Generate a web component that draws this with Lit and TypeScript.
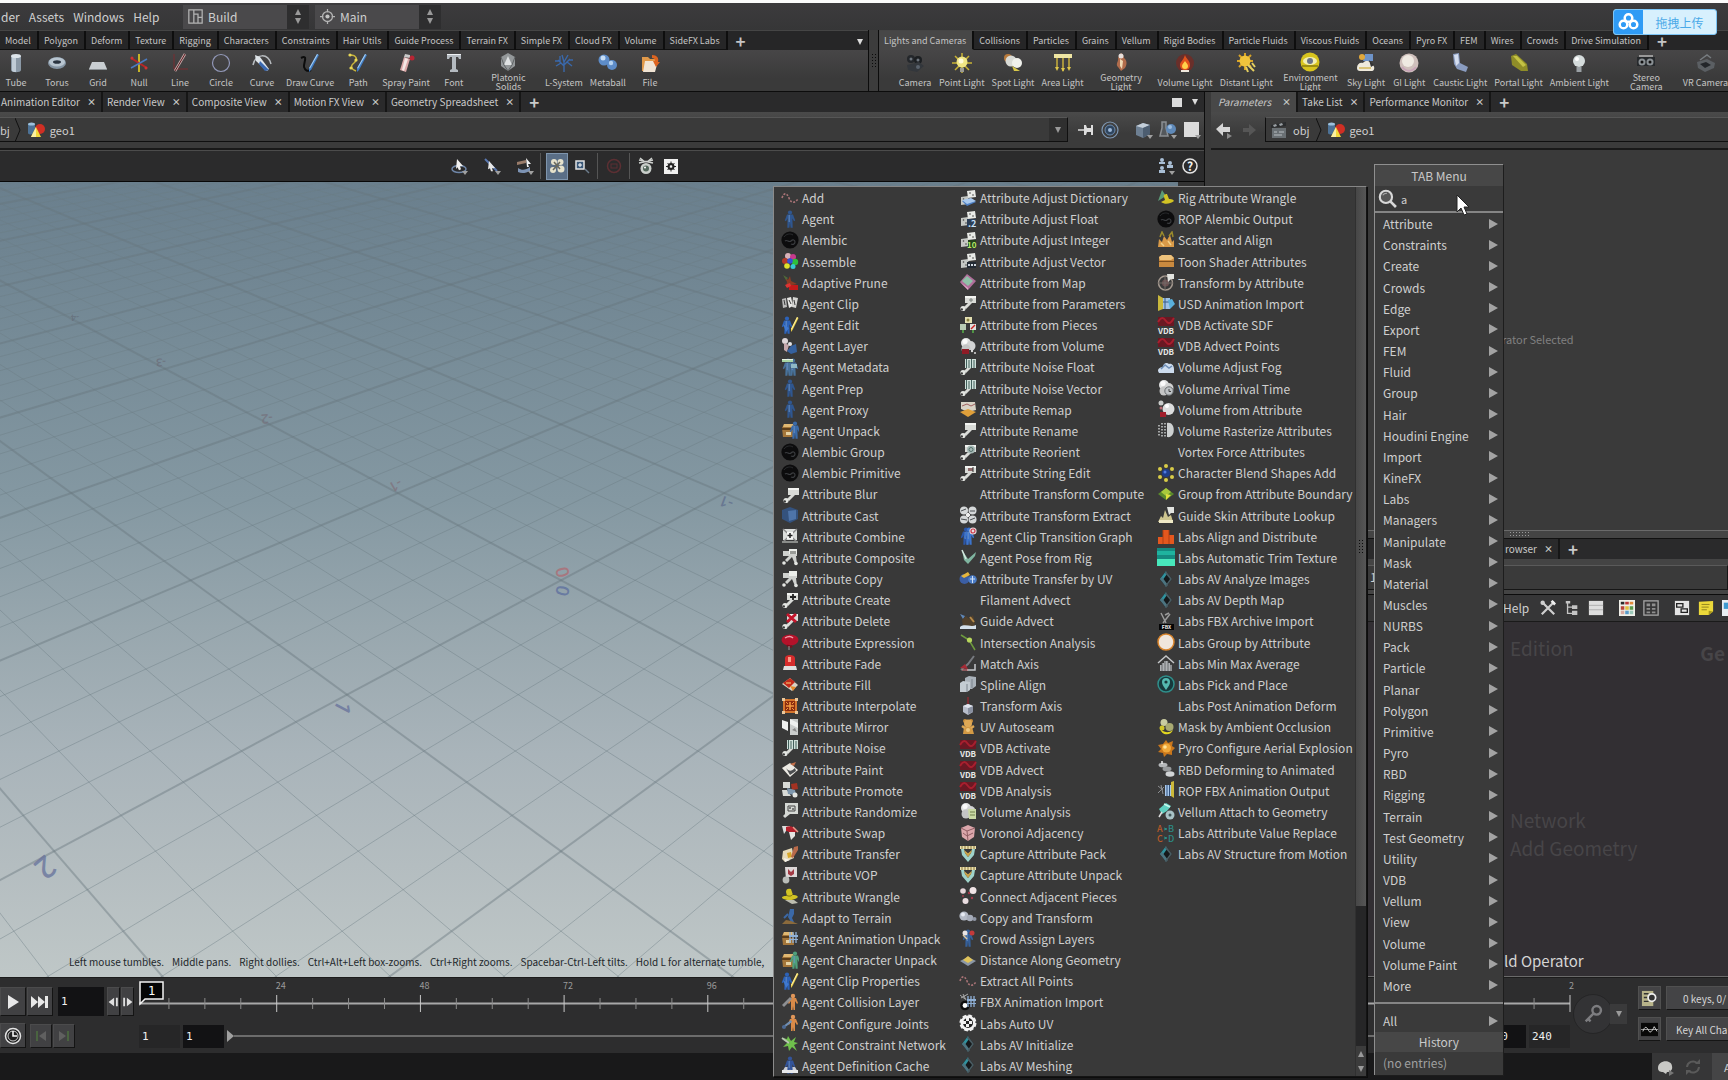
import { LitElement, html, svg, css } from "lit";
import type { TemplateResult } from "lit";
import { customElement, property } from "lit/decorators.js";
import { classMap } from "lit/directives/class-map.js";

type Art = TemplateResult | string;

/* ---------- icon parts (18 x 18 box) ---------- */
const attr = (over: Art = "", fill = "#d9dbd7") => svg`
  <path d="M6 2h11v7h-4l-6 6-2-2 4-4H6z" fill=${fill}/>
  <path d="M6 2h11v2H6z" fill="#f3f4f1"/>
  <circle cx="4" cy="14.5" r="2.6" fill="#e4e6e2"/><circle cx="2.8" cy="15.4" r="1.2" fill="#3a3a3a"/>${over}`;
const attrTwo = (over: Art = "") => svg`
  <path d="M2 3h9v-2h5v7h-1l1 8h-2l-3-7-5 5-2-2 4-4H2z" fill="#cfd1ce"/>
  <path d="M8 1h8v5H8z" fill="#eceeea"/><circle cx="3" cy="15" r="1.8" fill="#e4e6e2"/><circle cx="15" cy="15.5" r="1.8" fill="#e4e6e2"/>${over}`;
const person = (c = "#2f568f", x = 0) => svg`
  <g transform=${`translate(${x} 0)`}><circle cx="9" cy="2.6" r="2.1" fill=${c}/>
  <path d="M6 4.500h6l2.200 6-1.200.8-1.600-3 .3 9.400H9.600L9 12.500l-.6 5.200H6.300l.3-9.400-1.600 3-1.200-.8z" fill=${c}/><path d="M7.500 5h1.500v7H7.500z" fill="#6d92c4" opacity=".6"/></g>`;
const dice = (over: Art = "") => svg`
  <path d="M8 2l8-1 1 7-8 1z" fill="#e9ebe7"/><path d="M2 8l7-1 1 8-8 1z" fill="#c5c8c4"/>
  <circle cx="11" cy="4" r=".8" fill="#444"/><circle cx="14" cy="6" r=".8" fill="#444"/><circle cx="4.500" cy="10" r=".8" fill="#444"/><circle cx="7" cy="13" r=".8" fill="#444"/>${over}`;
const alembic = svg`<circle cx="9" cy="9" r="8.600" fill="#0c0c0d"/>
  <path d="M4 10c2-2 4 2 6 0s4-1 4 1-2 3-4 2" fill="none" stroke="#3b3d40" stroke-width="1.200"/><path d="M3 6c2-3 6-4 9-2" fill="none" stroke="#2a2c2e"/>`;
const vdb = svg`<rect x="1" y="1" width="16" height="9" fill="#6a1823"/>
  <path d="M1 6c3-5 5-5 8-1s5 2 8-3" fill="none" stroke="#a81f2e" stroke-width="2"/>
  <text x="9" y="17.500" font-size="8" font-weight="700" text-anchor="middle" fill="#e8e8e8">VDB</text>`;
const labs = svg`<path d="M9 1l6 8-6 8-6-8z" fill="#15191b"/><path d="M9 1L3 9l2 2 5-7z" fill="#2f929e"/>
  <path d="M3 9l6 8 2-2-6-8z" fill="#4c7480"/><path d="M9 1l6 8-6 8-1-1 5-7-5-6z" fill="#4a5c62"/>`;
const chest = (over: Art) => svg`<path d="M1 7l2-4h9l1 4v9H2z" fill="#a4763a"/><path d="M1 7h12v2H1z" fill="#5b3d1a"/>
  <path d="M3 3h9l1 3H2z" fill="#e0b872"/><path d="M5 11h5v3H5z" fill="#e5d2a4"/>${over}`;
const cloud = (over: Art = "") => svg`<circle cx="7" cy="6" r="5" fill="#e2e3e3"/><circle cx="11.500" cy="9" r="5" fill="#d2d3d3"/>
  <circle cx="7" cy="12" r="4.500" fill="#c4c5c5"/><circle cx="6" cy="4.500" r="2.500" fill="#fafafa"/>${over}`;
const pencil = svg`<path d="M16 1l1.500 1-6 12-1.500 2V13z" fill="#e9cf4a"/><path d="M16 1l.8.500-6 12-.8-.5z" fill="#fff0a0"/>`;
const film = svg`<path d="M8 6h9v2H8zM8 10h9v1H8z" fill="#8fb0d6"/><path d="M9 3v11M12 3v11M15 3v11" stroke="#8fb0d6" stroke-width="1.300"/>`;
const dotted = svg`<path d="M1 9c2-6 5-5 7 0s5 6 9 1" fill="none" stroke="#a87376" stroke-width="1.600" stroke-dasharray="2 1.500"/>`;
const orangeMan = (over: Art) => svg`<circle cx="12" cy="3" r="2.200" fill="#e0975a"/>
  <path d="M9 5h6l2 5-1 1-2-3v9h-1.500l-.5-4-.5 4H10V8L8 11l-1-1z" fill="#d98a48"/>${over}`;
const shield = svg`<path d="M1 1h16v3H1z" fill="#eadfae"/><path d="M3 1v3M6 1v3M9 1v3M12 1v3M15 1v3" stroke="#8d7a3c"/>
  <path d="M2 4l1 6 6 7 6-7 1-6-3 0-1 4-3 4-3-4-1-4z" fill="#9fd3ca"/><path d="M5 5l4 3 4-3-1 3-3 4-3-4z" fill="#c8a24a"/><path d="M6 5h6l-3 3z" fill="#3a3a3a"/>`;
const noise = svg`<path d="M6 1h11v9H6z" fill="#cfe0da"/><path d="M7.500 1v9M10 2v8M12.500 1v9M15 2v8" stroke="#42605b" stroke-width="1"/>`;

const icons: Record<string, Art> = {
  none: "",
  dotted,
  agent: person(),
  alembic,
  assemble: svg`<circle cx="7" cy="4" r="3" fill="#d8b0b8"/><circle cx="12" cy="5" r="3" fill="#c73a8c"/><circle cx="4" cy="9" r="3" fill="#b33a2a"/>
    <circle cx="14" cy="10" r="3.200" fill="#2ebf3b"/><circle cx="9" cy="9" r="2.800" fill="#3350d8"/><circle cx="6" cy="14" r="2.800" fill="#e0e22c"/><circle cx="12" cy="14.500" r="2.500" fill="#36c9d1"/>`,
  prune: svg`<path d="M3 3l4 4 2-4 1 5 6 3-5 1-6 2 1-5z" fill="#8a3b24"/><path d="M8 12h9v5h-9z" fill="#c21a1a"/><path d="M4 12l5-2 1 3-4 2z" fill="#d33"/><path d="M2 2l5 3-2 2z" fill="#4e6a3a"/>`,
  clip: svg`<path d="M1 5l4-1 1 9-4 1z" fill="#bbb"/><path d="M6 4l4-1 2 9-4 2z" fill="#e8e8e6"/><path d="M12 3l5 1-2 10-4-1z" fill="#d5d5d3"/><path d="M8 6l2 4M13 6l1 5M3 6l1 5" stroke="#3a3a3a"/>`,
  edit: svg`${person("#2c62b8", -3)}<path d="M2 8l6 4-3 4z" fill="#3f79d0"/>${pencil}`,
  layer: svg`<circle cx="4" cy="4" r="3" fill="#ded6d8"/><path d="M3 6l5 2-2 7-3-2z" fill="#c5a7ab"/><path d="M10 9l5-2 1 8-6 2-4-3z" fill="#35619f"/><circle cx="9" cy="7" r="2" fill="#e4e4e8"/>`,
  meta: svg`${person("#48729a", 3)}${person("#48729a", -2)}<path d="M1 1h11v3H1z" fill="#a9d6a4"/><path d="M1 1h11v1H1z" fill="#e6f2e4"/><path d="M10 6h6v4h-6z" fill="#8fb9c4"/>`,
  unpack: chest(person("#3a6aa8", 5)),
  unpackAnim: chest(film),
  unpackChar: chest(person("#4fa07c", 5)),
  blur: svg`<g transform="translate(1 1)">${attr()}</g>`,
  cast: svg`<path d="M1 4l8-3 8 3v9l-8 4-8-4z" fill="#34527d"/><path d="M7 5l8-1v9l-7 2z" fill="#4e74a8"/>`,
  combine: svg`<path d="M2 2h14v11H2z" fill="#dcdedb"/><path d="M2 2l14 13M16 2L2 15" stroke="#888" stroke-width="1.500"/><path d="M6 5h6v7H6z" fill="#f6f6f4"/><path d="M9 6v5M6.500 8.500h5" stroke="#222" stroke-width="1.500"/><path d="M1 14h16v2H1z" fill="#8a8c89"/>`,
  composite: attrTwo(svg`<path d="M9 3h6v3H9z" fill="#9a9c98"/>`),
  copy: attrTwo(),
  create: attr(svg`<path d="M12 3v6M9 6h6" stroke="#222" stroke-width="1.800"/>`),
  del: attr(svg`<path d="M6 2l9 8M15 2L6 10" stroke="#c5152b" stroke-width="3"/>`),
  expr: svg`<ellipse cx="9" cy="7" rx="8.500" ry="5.500" fill="#b3122a"/><path d="M4 5c3-2 6-2 8 0" stroke="#f0a0aa" stroke-width="1.500" fill="none"/><path d="M6 13c2-1 3 2 5 0" stroke="#7a0d1a" stroke-width="2" fill="none"/><path d="M8 13v4" stroke="#999"/>`,
  fade: svg`<path d="M4 4c0-4 10-4 10 0v8H4z" fill="#d62c2c"/><path d="M7 3h3v5H7z" fill="#ff9d8a"/><path d="M3 12h12l1 4H2z" fill="#dfdfdf"/>`,
  fill: svg`<path d="M1 9l8-6 8 7-6 6z" fill="#d8d2c4"/><path d="M2 8l7-5 5 4-6 6z" fill="#c42a1a"/><path d="M9 11l6 1-3 4z" fill="#e58a2a"/><path d="M5 8h5" stroke="#ffd27a"/>`,
  interp: svg`<rect x="2" y="2" width="14" height="14" fill="#d4752d"/><rect x="4" y="4" width="10" height="10" fill="#8c2c10"/><path d="M5 9h8M9 5v8" stroke="#f09a40" stroke-width="1.600"/><path d="M5 5l2 2M13 5l-2 2M5 13l2-2M13 13l-2-2" stroke="#f09a40"/><path d="M1 1h3v3H1zM14 1h3v3h-3zM1 14h3v3H1zM14 14h3v3h-3z" fill="#e9c79c"/>`,
  mirror: svg`<path d="M1 2l6 2v9l-6-3z" fill="#f0f1f0"/><path d="M9 1h8v16H9z" fill="#c9cccb"/><path d="M9 1l8 4v5L9 6z" fill="#eef0ef"/><path d="M11 12l3-2 2 4z" fill="#888"/>`,
  noise: attr(noise),
  paint: svg`<path d="M1 8l8-5 8 7-8 7z" fill="#eceae4"/><path d="M5 8c3 4 6 3 9 0l1 3-6 4z" fill="#4c4e50"/><path d="M9 4l6-2-2 4z" fill="#c7714a"/>`,
  promote: svg`<path d="M2 1h7v6H2zM1 9h5l4 6H2z" fill="#d8dad6"/><path d="M10 3l6-1 1 6-6 1z" fill="#a43222"/><path d="M6 7l8 2 1 5-8-1z" fill="#7f97ad"/><circle cx="14" cy="14" r="2.500" fill="#e4e6e2"/>`,
  random: svg`<path d="M4 1h13v11H9l-5 4-2-2 2-2z" fill="#d5d8d4"/><path d="M7 4h7v5H7z" fill="none" stroke="#444"/><circle cx="9" cy="6" r=".8"/><circle cx="12" cy="7" r=".8"/>`,
  swap: svg`<path d="M1 2h8v5H5l-2 3-1-4z" fill="#ddd"/><path d="M5 3c4-2 9 0 11 4l-4 4C9 9 7 7 5 7z" fill="#b3202c"/><path d="M8 8h6v4l-4 4z" fill="#e5e5e2"/><path d="M12 3l5 5" stroke="#e89a8a" stroke-width="1.500"/>`,
  transfer: svg`<path d="M2 6l9-3 2 10-9 4-3-3z" fill="#e6d9b8"/><path d="M6 8l4-1 1 5-4 1z" fill="#d8a72a"/><path d="M13 2l4-1v4l-5 8-2-1z" fill="#b86a4a"/><path d="M3 13l6 2-5 2z" fill="#f4f2ec"/>`,
  vop: svg`<path d="M4 1h12v10H8l-3 3z" fill="#ddd8d8"/><path d="M7 3l3 3 3-3v5l-3 2-3-2z" fill="#a23a44"/><circle cx="5" cy="14" r="3.400" fill="#b9bcb9"/>`,
  wrangle: svg`<path d="M1 11c4 3 12 3 16-1-1-2-4-2-5-2L10 2C7 1 5 2 5 5l1 4c-2 0-5 0-5 2z" fill="#d2c324"/><path d="M5 8c3 2 6 1 7-1" stroke="#7a6f10" fill="none"/><path d="M4 13h9l4 3-6 1z" fill="#bdbdaf"/>`,
  adapt: svg`<path d="M9 1h4v5l-2 4 2 4h-3L7 9z" fill="#3b68a6"/><path d="M7 6l-4 4" stroke="#3b68a6" stroke-width="2"/><path d="M1 16l4-4 5 1 7 3z" fill="#8a6a3c"/>`,
  collision: orangeMan(svg`<path d="M1 12l8-8 2 2-8 8z" fill="#8d8f92"/>`),
  joints: orangeMan(svg`<path d="M1 13l9-7 1 2-8 6z" fill="#6f8fb4"/><circle cx="3" cy="13" r="2" fill="#4d6a94"/>`),
  constraint: svg`<path d="M9 8L2 3l4 1 1-3 3 5 5-4-2 5 4 1-4 2 3 6-5-4-3 4-1-5-5 1 4-4z" fill="#6fc04c"/><path d="M1 3l7 5" stroke="#b9c8b2" stroke-width="2"/>`,
  cache: svg`<path d="M4 11h10l3 5H1z" fill="#c9ccd4"/>${person("#33549a")}<path d="M1 14h16v3H1z" fill="#e6e8ec"/>`,
  adjDict: dice(svg`<path d="M3 12l9-2 5 3-9 4z" fill="#4d7fc4"/><path d="M3 11l9-2 5 3-9 3z" fill="#a9c9ee"/>`),
  adjFloat: dice(svg`<rect x="8" y="9" width="9" height="8" fill="#2c3e55"/><text x="9" y="17" font-size="9" font-weight="700" fill="#cfe2f5">.2</text>`),
  adjInt: dice(svg`<rect x="9" y="9" width="8" height="8" fill="#24401c"/><text x="8" y="17" font-size="8" font-weight="700" fill="#b6e86a">10</text>`),
  adjVec: dice(svg`<rect x="8" y="10" width="9" height="6" fill="#222a33"/><path d="M9 13h8" stroke="#cfd6dd" stroke-width="2" stroke-dasharray="2 1"/>`),
  map: svg`<path d="M8 1l9 7-8 9-8-8z" fill="#b06f9b"/><path d="M8 3l6 5-5 5-6-5z" fill="#8fc1a8"/><path d="M1 9l8 8v-2z" fill="#e2a7c8"/>`,
  params: attr(svg`<path d="M12 4v4M10 6h4" stroke="#7b807c"/>`),
  pieces: svg`<rect x="6" y="1" width="7" height="6" fill="#e4e0b2"/><rect x="1" y="8" width="6" height="6" fill="#b9cbb4"/><rect x="11" y="8" width="6" height="6" fill="#dfe1dd"/><path d="M12 13l4-4" stroke="#c22" stroke-width="1.500"/><path d="M4 14v3M14 14v3" stroke="#58b04a" stroke-width="1.500"/><circle cx="9" cy="4" r="1.500" fill="#8a8240"/>`,
  volRed: cloud(svg`<rect x="3" y="12" width="7" height="5" fill="#8e1b26"/><circle cx="13" cy="14" r="1.200" fill="#ddd"/><circle cx="16" cy="16" r="1" fill="#ddd"/><rect x="10" y="13" width="2" height="2" fill="#3a3a3a"/>`),
  remap: svg`<path d="M2 2h14l1 8-8 2-7-3z" fill="#d9d3c6"/><path d="M1 12l8-3 8 3-8 5z" fill="#e0a03a"/><path d="M3 6l5-2 4 2 4-2" stroke="#a06060" fill="none"/>`,
  attr: attr(),
  reorient: attr(svg`<circle cx="12" cy="6.500" r="4" fill="#a5b8b4"/><circle cx="12" cy="6.500" r="2" fill="none" stroke="#55706a"/>`),
  strEdit: attr(svg`<rect x="9" y="4" width="5" height="3" fill="#8f6a6a"/><path d="M14 3v5" stroke="#333"/>`),
  extract: svg`<g fill="#d5d8d9"><circle cx="5" cy="4.500" r="4"/><circle cx="13.500" cy="4.500" r="4"/><circle cx="5" cy="13.500" r="4"/><circle cx="13.500" cy="13.500" r="4"/></g><path d="M2 5l5-2M11 5h5M2 13l6 1M11 14l5-2" stroke="#4b4f52"/><path d="M7 9h4M9 7v4" stroke="#eee" stroke-width="2"/>`,
  transGraph: svg`${person("#2b56a8", -2)}${person("#3c74cc", 1)}<circle cx="14" cy="4" r="3.600" fill="#e9dede"/><circle cx="14" cy="4" r="2" fill="none" stroke="#c8364a" stroke-width="1.200"/>`,
  pose: svg`<path d="M3 2l6 9 8-7-1 4-7 8-4-4z" fill="#7fb5a0"/><path d="M3 2l4 9" stroke="#d6e8e0" stroke-width="1.500"/>`,
  transUV: svg`<circle cx="5.500" cy="9" r="5" fill="#3b5ea4"/><path d="M2 6l7-4 2 3-6 3z" fill="#e5b53c"/><circle cx="13.500" cy="9.500" r="4.300" fill="#4b7cc6"/><path d="M11 9h5M13.500 6v7" stroke="#cfe0f6"/>`,
  guide: svg`<path d="M1 2l5 2-2 3z" fill="#5f87b8"/><path d="M3 8l4-4 3 3 4-4 2 8-1 3H4z" fill="#50402c"/><path d="M1 15c5-4 11 1 16-2v4H1z" fill="#d5e0ea"/><path d="M11 5l4 5" stroke="#b58a4a" stroke-width="2"/>`,
  inter: svg`<path d="M2 2l8 5 6 10" fill="none" stroke="#6d9a3e" stroke-width="1.500"/><circle cx="10.500" cy="7" r="2.600" fill="#b7d65c"/>`,
  match: svg`<path d="M2 16l7-6 6-8" stroke="#777a80" stroke-width="2" fill="none"/><path d="M1 14l5-4 3 5z" fill="#a52a35"/><path d="M8 16h8v-6" stroke="#c5c7cc" stroke-width="1.500" fill="none"/><path d="M3 16h6" stroke="#e07a80"/>`,
  spline: svg`<path d="M6 3l4-2 7 1v9l-4 3H6z" fill="#aab2ba"/><path d="M1 8l3-2 7 1v8l-3 2H1z" fill="#c4ccd3"/><path d="M8 9v8M13 4v9" stroke="#7a838c"/>`,
  tAxis: svg`<path d="M9 0v7" stroke="#8a2a30" stroke-width="1.500"/><path d="M4 9l5-2 5 2v6l-5 3-5-3z" fill="#b7bdca"/><path d="M9 11v6l5-2V9z" fill="#8990a0"/><path d="M4 9l5-2 5 2-5 2z" fill="#e1e5ee"/>`,
  teddy: svg`<circle cx="6" cy="3" r="2" fill="#c98f3e"/><circle cx="12" cy="3" r="2" fill="#c98f3e"/><circle cx="9" cy="5.500" r="4" fill="#e0a955"/><path d="M5 9h8l2 7H4z" fill="#d39a45"/><path d="M3 8l3 2M15 8l-3 2" stroke="#e0a955" stroke-width="2.500"/><circle cx="9" cy="12" r="2" fill="#efc880"/>`,
  vdb,
  volAn: cloud(svg`<path d="M9 7h8v10h-7z" fill="#c9d8a4"/><path d="M11 10h5M11 13h5" stroke="#6f7f4a"/>`),
  voronoi: svg`<path d="M2 4l7-3 7 3-1 9-6 4-6-4z" fill="#dba7ab"/><path d="M2 4l6 3 8-3M8 7l1 10M4 9l4 3 6-3" stroke="#8f5c62" fill="none"/>`,
  shield,
  connect: svg`<circle cx="4" cy="4" r="2.800" fill="#e5d5d8"/><circle cx="14" cy="3.500" r="3.500" fill="#f0e4e6"/><circle cx="6.500" cy="14" r="3" fill="#eadde0"/><circle cx="10" cy="6" r="1.200" fill="#a03848"/><circle cx="13" cy="11" r="1.200" fill="#a03848"/><circle cx="4" cy="9" r="1" fill="#a03848"/>`,
  copyT: svg`<circle cx="5" cy="8" r="4.600" fill="#b4bac6"/><circle cx="4" cy="6.500" r="2" fill="#e6eaf2"/><circle cx="11" cy="10" r="3.300" fill="#a5abb8"/><circle cx="15.500" cy="11" r="2" fill="#9097a5"/>`,
  crowd: svg`${person("#35609a")}<circle cx="6" cy="4" r="2.500" fill="#e8e4e4"/><circle cx="13" cy="4" r="2.500" fill="#c43a3a"/><path d="M4 6l4 4" stroke="#e0c8a0" stroke-width="1.500"/>`,
  distance: svg`<path d="M1 10l8-4 8 4-8 5z" fill="#8b97a6"/><path d="M4 9l5-4 5 4-5 3z" fill="#e0c35a"/>`,
  fbx: svg`<path d="M1 2l5 4M2 5l7-4M4 1l3 6" stroke="#aaa"/><circle cx="6" cy="12.500" r="4.800" fill="#0e0e0e"/><circle cx="6" cy="12.500" r="2.400" fill="#fff"/>${film}`,
  autoUV: svg`<circle cx="9" cy="9" r="7.500" fill="#f2f2f2" stroke="#f2f2f2" stroke-width="2" stroke-dasharray="3.900 2"/><circle cx="9" cy="9" r="5" fill="#222"/><path d="M7 4h3v3H7zM4 7h3v3H4zM10 7h3v3h-3zM7 10h3v3H7z" fill="#f2f2f2"/>`,
  labs,
  rigWr: svg`<path d="M1 12L5 1l4 6z" fill="#5b9a76"/><path d="M4 13c4 3 9 2 13-1-1-2-4-2-5-2l-2-5c-2 0-4 1-3 3l1 3z" fill="#d2c324"/>`,
  scatter: svg`<path d="M1 16l1-8 3 3 2-6 3 4 3-5 2 7 2-2v7z" fill="#d99a48"/><path d="M3 6L5 1l2 4M12 5l3-4 1 5" stroke="#9a8a2c" stroke-width="1.500" fill="none"/><path d="M4 12l3 3M11 10l3 4" stroke="#f2d088" stroke-width="1.500"/>`,
  toon: svg`<path d="M2 5l3-2h9l3 3v9H2z" fill="#c98a3f"/><path d="M2 5l3-2h9l3 3-3 2H3z" fill="#edc27c"/><path d="M2 9h15v1H2z" fill="#7d4f1d"/>`,
  tByAttr: svg`<circle cx="8.500" cy="10" r="7" fill="none" stroke="#a59a90" stroke-width="1.500"/><circle cx="8.500" cy="10" r="3.500" fill="#6c5152"/><path d="M8 2v15M1 10h15" stroke="#726a66"/><path d="M10 1h7v5h-3l-3 3z" fill="#e2e4e0"/>`,
  usd: svg`<path d="M1 1l5 3v11l-5 2z" fill="#c9b83c"/><path d="M6 4h7v11H6z" fill="#9fc2e6"/><path d="M8 4v11M6 8h7" stroke="#395a86"/><path d="M11 6l4-1 3 5-5 5z" fill="#5ab0dc"/>`,
  fog: svg`<path d="M1 13c0-3 3-4 5-4 0-4 4-5 6-3 3-1 5 2 5 5v4H2z" fill="#cddcee"/><path d="M4 11l4-4 4 3 3-2" stroke="#6d8db5" fill="none" stroke-width="1.500"/>`,
  arrival: cloud(svg`<circle cx="12" cy="12" r="4.200" fill="#bfc3c6" stroke="#6a6e71"/><path d="M12 10v2.500h2" stroke="#444" fill="none"/>`),
  volFrom: svg`<circle cx="11.500" cy="9" r="6" fill="#dcdddd"/><circle cx="4" cy="3" r="2.500" fill="#c9cbca"/><rect x="3" y="12" width="6" height="5" fill="#a11f2c"/><circle cx="10" cy="6" r="2" fill="#fff"/><circle cx="4" cy="8" r="1.500" fill="#b86a72"/>`,
  raster: svg`<path d="M10 2c9-2 9 16 0 14z" fill="#cdd0d0"/><path d="M2 4v11M5 2v14M8 2v14" stroke="#c0c3c3" stroke-width="1.600" stroke-dasharray="1.500 1.500"/>`,
  blend: svg`<g fill="#d8cc48"><circle cx="9" cy="2" r="2"/><circle cx="9" cy="16" r="2"/><circle cx="3" cy="5" r="2"/><circle cx="15" cy="5" r="2"/><circle cx="3" cy="13" r="2"/><circle cx="15" cy="13" r="2"/></g><circle cx="9" cy="9" r="4" fill="#1e3d8a"/><circle cx="8" cy="8" r="1.500" fill="#4f7be0"/>`,
  group: svg`<path d="M9 3l8 6-8 6-8-6z" fill="#5b8a2c"/><path d="M9 3l5 4-5 4-5-4z" fill="#a8c83c"/><path d="M9 9l5 1-5 5z" fill="#e0e03c"/>`,
  skin: svg`<path d="M1 16l3-6 2 2 2-8 3 7 3-2 2 7z" fill="#cfc68f"/><path d="M10 1h7v6h-3l-2 2z" fill="#e2e4e0"/><path d="M2 14h14v3H2z" fill="#efe9c6"/>`,
  bars: svg`<path d="M1 10h5v7H1zM6 3h6v14H6zM12 8h5v9h-5z" fill="#e4571e"/><path d="M6 3v14M12 3v14" stroke="#b33f10"/>`,
  trim: svg`<rect width="18" height="18" fill="#158a80"/><path d="M0 3h18v4H0z" fill="#1fb39f"/><path d="M0 11h18v7H0z" fill="#48e8bc"/>`,
  fbxIn: svg`<path d="M4 1l5 10M13 2L6 11M8 3l4-2" stroke="#9a9a9a" stroke-width="1.500"/><rect x="2" y="12" width="15" height="6" fill="#050505"/><text x="9.500" y="17" font-size="5" font-weight="700" text-anchor="middle" fill="#eee">FBX</text>`,
  ring: svg`<circle cx="9" cy="9" r="8" fill="#f0e6dc" stroke="#d9852c" stroke-width="1.500"/>`,
  minmax: svg`<path d="M1 9l8-7 8 7" fill="none" stroke="#c4c6c8" stroke-width="1.500"/><path d="M3 11h12v6H3zM5 9h8v2H5zM7 7h4v2H7z" fill="#aeb1b4"/><path d="M5 9v8M8 7v10M11 7v10M14 10v7" stroke="#55585b" stroke-width=".8"/>`,
  pin: svg`<circle cx="9" cy="9" r="8" fill="#17393c" stroke="#2f8f8b" stroke-width="1.500"/><path d="M9 15c-3-4-4-6-4-8a4 4 0 018 0c0 2-1 4-4 8z" fill="#54b9b0"/><circle cx="9" cy="7" r="1.600" fill="#17393c"/>`,
  maskAO: svg`<circle cx="7" cy="4.500" r="3.500" fill="#c9cba0"/><circle cx="12.500" cy="9" r="4" fill="#a9aa72"/><path d="M3 10c2 4 8 6 13 2-2 6-12 6-13-2z" fill="#e2d820"/><circle cx="5" cy="10" r="2.500" fill="#cfc528"/>`,
  boom: svg`<path d="M9 1l2 3 5-2-1 5 3 2-3 3 0 4-5-1-3 3-1-4-5-1 3-3-3-4 5-1z" fill="#c9771c"/><circle cx="9.500" cy="9" r="4.500" fill="#f0a83a"/><circle cx="8" cy="8" r="1.800" fill="#ffe39a"/>`,
  rbd: svg`<ellipse cx="6" cy="5" rx="4.500" ry="2.300" fill="#b4b7b9"/><ellipse cx="10" cy="9" rx="4.500" ry="2.400" fill="#96999b"/><ellipse cx="13" cy="14" rx="4.500" ry="2.800" fill="#d1d4d6"/><path d="M5 1v3" stroke="#eee" stroke-width="1.500"/>`,
  ropFbx: svg`<path d="M1 5l5 4M1 12l6-6M4 4l2 9" stroke="#8d8f92"/><path d="M8 4h7v11H8z" fill="#a9c8ea"/><path d="M10 4v11M12.500 4v11" stroke="#30507a"/><path d="M14 1l3-1v17l-3-2z" fill="#cbb83a"/>`,
  vellum: svg`<path d="M2 7l7-6 5 3-4 5-5 3z" fill="#5fcfc0"/><path d="M7 2l6 3" stroke="#c6f5ec" stroke-width="1.500"/><path d="M5 10l-3 5" stroke="#ddd" stroke-width="1.500"/><circle cx="13" cy="13" r="4.500" fill="#a9c2c6"/><circle cx="13" cy="13" r="1.500" fill="#41575b"/>`,
  abcd: svg`<g font-size="9" font-weight="500"><text x="0" y="8" fill="#b85a28">A</text><text x="11" y="8" fill="#2d8c86">B</text><text x="0" y="18" fill="#b85a28">C</text><text x="11" y="18" fill="#2d8c86">D</text></g><path d="M7 4l3 1-3 1M7 13l3 1-3 1" stroke="#2d8c86" fill="none"/>`,
};

type Item = [string, string];
const columns: Item[][] = [
  [["Add", "dotted"], ["Agent", "agent"], ["Alembic", "alembic"], ["Assemble", "assemble"], ["Adaptive Prune", "prune"], ["Agent Clip", "clip"], ["Agent Edit", "edit"], ["Agent Layer", "layer"], ["Agent Metadata", "meta"], ["Agent Prep", "agent"], ["Agent Proxy", "agent"], ["Agent Unpack", "unpack"], ["Alembic Group", "alembic"], ["Alembic Primitive", "alembic"], ["Attribute Blur", "blur"], ["Attribute Cast", "cast"], ["Attribute Combine", "combine"], ["Attribute Composite", "composite"], ["Attribute Copy", "copy"], ["Attribute Create", "create"], ["Attribute Delete", "del"], ["Attribute Expression", "expr"], ["Attribute Fade", "fade"], ["Attribute Fill", "fill"], ["Attribute Interpolate", "interp"], ["Attribute Mirror", "mirror"], ["Attribute Noise", "noise"], ["Attribute Paint", "paint"], ["Attribute Promote", "promote"], ["Attribute Randomize", "random"], ["Attribute Swap", "swap"], ["Attribute Transfer", "transfer"], ["Attribute VOP", "vop"], ["Attribute Wrangle", "wrangle"], ["Adapt to Terrain", "adapt"], ["Agent Animation Unpack", "unpackAnim"], ["Agent Character Unpack", "unpackChar"], ["Agent Clip Properties", "edit"], ["Agent Collision Layer", "collision"], ["Agent Configure Joints", "joints"], ["Agent Constraint Network", "constraint"], ["Agent Definition Cache", "cache"]],
  [["Attribute Adjust Dictionary", "adjDict"], ["Attribute Adjust Float", "adjFloat"], ["Attribute Adjust Integer", "adjInt"], ["Attribute Adjust Vector", "adjVec"], ["Attribute from Map", "map"], ["Attribute from Parameters", "params"], ["Attribute from Pieces", "pieces"], ["Attribute from Volume", "volRed"], ["Attribute Noise Float", "noise"], ["Attribute Noise Vector", "noise"], ["Attribute Remap", "remap"], ["Attribute Rename", "attr"], ["Attribute Reorient", "reorient"], ["Attribute String Edit", "strEdit"], ["Attribute Transform Compute", "none"], ["Attribute Transform Extract", "extract"], ["Agent Clip Transition Graph", "transGraph"], ["Agent Pose from Rig", "pose"], ["Attribute Transfer by UV", "transUV"], ["Filament Advect", "none"], ["Guide Advect", "guide"], ["Intersection Analysis", "inter"], ["Match Axis", "match"], ["Spline Align", "spline"], ["Transform Axis", "tAxis"], ["UV Autoseam", "teddy"], ["VDB Activate", "vdb"], ["VDB Advect", "vdb"], ["VDB Analysis", "vdb"], ["Volume Analysis", "volAn"], ["Voronoi Adjacency", "voronoi"], ["Capture Attribute Pack", "shield"], ["Capture Attribute Unpack", "shield"], ["Connect Adjacent Pieces", "connect"], ["Copy and Transform", "copyT"], ["Crowd Assign Layers", "crowd"], ["Distance Along Geometry", "distance"], ["Extract All Points", "dotted"], ["FBX Animation Import", "fbx"], ["Labs Auto UV", "autoUV"], ["Labs AV Initialize", "labs"], ["Labs AV Meshing", "labs"]],
  [["Rig Attribute Wrangle", "rigWr"], ["ROP Alembic Output", "alembic"], ["Scatter and Align", "scatter"], ["Toon Shader Attributes", "toon"], ["Transform by Attribute", "tByAttr"], ["USD Animation Import", "usd"], ["VDB Activate SDF", "vdb"], ["VDB Advect Points", "vdb"], ["Volume Adjust Fog", "fog"], ["Volume Arrival Time", "arrival"], ["Volume from Attribute", "volFrom"], ["Volume Rasterize Attributes", "raster"], ["Vortex Force Attributes", "none"], ["Character Blend Shapes Add", "blend"], ["Group from Attribute Boundary", "group"], ["Guide Skin Attribute Lookup", "skin"], ["Labs Align and Distribute", "bars"], ["Labs Automatic Trim Texture", "trim"], ["Labs AV Analyze Images", "labs"], ["Labs AV Depth Map", "labs"], ["Labs FBX Archive Import", "fbxIn"], ["Labs Group by Attribute", "ring"], ["Labs Min Max Average", "minmax"], ["Labs Pick and Place", "pin"], ["Labs Post Animation Deform", "none"], ["Mask by Ambient Occlusion", "maskAO"], ["Pyro Configure Aerial Explosion", "boom"], ["RBD Deforming to Animated", "rbd"], ["ROP FBX Animation Output", "ropFbx"], ["Vellum Attach to Geometry", "vellum"], ["Labs Attribute Value Replace", "abcd"], ["Labs AV Structure from Motion", "labs"]],
];

const categories = ["Attribute", "Constraints", "Create", "Crowds", "Edge", "Export", "FEM", "Fluid", "Group", "Hair", "Houdini Engine", "Import", "KineFX", "Labs", "Managers", "Manipulate", "Mask", "Material", "Muscles", "NURBS", "Pack", "Particle", "Planar", "Polygon", "Primitive", "Pyro", "RBD", "Rigging", "Terrain", "Test Geometry", "Utility", "VDB", "Vellum", "View", "Volume", "Volume Paint", "More"];

/* ---------- shelf tool art (20 x 20 box) ---------- */
const wand = svg`<path d="M17 1l2 1-8 15-2 2 0-4z" fill="#3f7cc4"/><path d="M17 1l1 .5-8 14-.8-.5z" fill="#a9d0f2"/>`;
const leftTools: [string, Art][] = [
  ["Tube", svg`<path d="M5 3v14c0 3 10 3 10 0V3z" fill="#8b99a6"/><path d="M6 4v14c1 1 3 1 4 1V4z" fill="#c0ccd6"/><ellipse cx="10" cy="3" rx="5" ry="2" fill="#dde4ea"/>`],
  ["Torus", svg`<ellipse cx="10" cy="10" rx="9" ry="6" fill="#8595a4"/><ellipse cx="10" cy="9" rx="8" ry="4.500" fill="#b8c5d0"/><ellipse cx="10" cy="9" rx="4" ry="1.800" fill="#2a3440"/>`],
  ["Grid", svg`<path d="M4 9h12l3 7H1z" fill="#c9ced2"/><path d="M1 16h18v1H1z" fill="#8a9094"/>`],
  ["Null", svg`<path d="M10 1v18" stroke="#c6b428" stroke-width="2"/><path d="M2 5l16 10" stroke="#b82626" stroke-width="2"/><path d="M2 15L18 6" stroke="#4a7ac0" stroke-width="1.500"/><circle cx="3" cy="5" r="1.500" fill="#c33"/><circle cx="17" cy="15" r="1.500" fill="#c33"/>`],
  ["Line", svg`<path d="M4 1v15h14" fill="none" stroke="#7a2c30"/><path d="M15 1L5 18" stroke="#c9a8a8" stroke-width="2.500"/><path d="M15 1L5 18" stroke="#5a2024" stroke-width="1"/>`],
  ["Circle", svg`<circle cx="10" cy="10" r="8.500" fill="none" stroke="#9298b8" stroke-width="1.200"/>`],
  ["Curve", svg`<path d="M1 12c3-12 15-12 18-1" fill="none" stroke="#b8bcc0" stroke-width="1.500"/><path d="M3 2l5 2 9 12-2 2L4 8z" fill="#dfe5ea"/><path d="M8 8l9 9-4 1-6-7z" fill="#3b69b0"/>`],
  ["Draw Curve", svg`<path d="M1 5c8-4 2 6 3 9s3 5 7 3" fill="none" stroke="#0c0c0c" stroke-width="2"/>${wand}`],
  ["Path", svg`<path d="M2 2c7 0 8 5 4 8s-3 6 2 8" fill="none" stroke="#c8b43c" stroke-width="1.500"/><circle cx="2" cy="2" r="1.600" fill="#e8d858"/><circle cx="8" cy="7" r="1.600" fill="#e8d858"/><circle cx="3" cy="15" r="1.600" fill="#e8d858"/>${wand}`],
  ["Spray Paint", svg`<path d="M8 4l6 2-4 13-6-2z" fill="#dba8a8"/><path d="M9 5l3 1-4 12-2-1z" fill="#f6e8e6"/><path d="M9 1l5 1v3l-6-1z" fill="#c9c9c9"/><circle cx="16" cy="5" r="2.500" fill="#b82634"/>`],
  ["Font", svg`<path d="M3 1h14v5h-2l-1-2h-2v12l2 1v2H6v-2l2-1V4H6L5 6H3z" fill="#b4bac0"/><path d="M3 1h14v1H3z" fill="#eef1f4"/>`],
  ["Platonic Solids", svg`<path d="M10 1l7 4v9l-7 5-7-5V5z" fill="#94989a"/><path d="M10 4l4 9H6z" fill="#dfe2e3"/><path d="M3 5l3 8 4 6 4-6 3-8" fill="none" stroke="#5e6264"/>`],
  ["L-System", svg`<path d="M10 19V9M10 13L4 7M10 12l6-6M10 9L8 2M10 9l4-7M5 8H1M7 10L2 13M15 7h4M13 9l5 4M6 9V3" stroke="#3a68aa" stroke-width="1.400"/>`],
  ["Metaball", svg`<circle cx="6" cy="7" r="5.500" fill="#5d8cc8"/><circle cx="14" cy="12" r="5" fill="#5d8cc8"/><circle cx="5" cy="5" r="2.500" fill="#c8def5"/><circle cx="13" cy="10" r="2.200" fill="#b5d2f0"/>`],
  ["File", svg`<path d="M2 4h6l2 2h7v3L5 18H2z" fill="#e0994a"/><path d="M5 8h13l-3 11H3z" fill="#f0e4d4"/><path d="M12 2c5 0 7 3 6 7l2 0-4 5-3-6h2c0-2-1-3-3-3z" fill="#dd6420"/>`],
];
const bulb = (c: string) => svg`<circle cx="10" cy="8" r="6" fill=${c}/><rect x="7.500" y="14" width="5" height="5" fill="#9aa0a4"/><circle cx="8" cy="6" r="2" fill="#fff"/>`;
const rightTools: [string, Art][] = [
  ["Camera", svg`<circle cx="6" cy="6" r="4" fill="#24272b"/><circle cx="13" cy="7" r="4" fill="#1c1f22"/><path d="M2 12l12-3 5 4-7 6-9-2z" fill="#33373c"/><circle cx="6" cy="6" r="1.500" fill="#6d747c"/><circle cx="13" cy="7" r="1.500" fill="#6d747c"/><circle cx="13" cy="14" r="2" fill="#5a636d"/>`],
  ["Point Light", svg`<path d="M10 0v20M0 10h20M3 3l14 14M17 3L3 17" stroke="#c8b234" stroke-width="1.500"/><circle cx="10" cy="9" r="5.500" fill="#f0e684"/><circle cx="9" cy="8" r="2.500" fill="#fffbd8"/><rect x="8" y="15" width="4" height="4" fill="#9a9a92"/>`],
  ["Spot Light", svg`<circle cx="5" cy="5" r="4" fill="#b87a3c"/><circle cx="8" cy="8" r="5.500" fill="#d9dbd6"/><circle cx="14" cy="10" r="5" fill="#f0f1ec"/><path d="M9 13l8 5-6 0z" fill="#d8c84a"/>`],
  ["Area Light", svg`<path d="M1 1h18v4H1z" fill="#efe6a4"/><path d="M4 5v11M10 5v13M16 5v11" stroke="#c8ae3c" stroke-width="1.500"/><path d="M2 14h4l-2 4zM8 15h4l-2 4zM14 14h4l-2 4z" fill="#e0c84c"/>`],
  ["Geometry Light", svg`<path d="M10 1c3 2 2 4 4 6s2 6 0 9l-4 3-3-4c-3-3 1-6 0-9z" fill="#b06c4c"/><circle cx="10" cy="4" r="2.500" fill="#e8e0dc"/><path d="M9 7l3 2-1 8-2-3z" fill="#efd9b4"/>`],
  ["Volume Light", svg`<circle cx="10" cy="10" r="9" fill="#6a2f2a"/><path d="M10 2c1 4 5 5 5 10 0 3-2 5-5 5s-5-2-5-5c0-3 3-4 5-10z" fill="#e0521c"/><path d="M10 8c1 2 3 3 3 5s-1 3-3 3-3-1-3-3 2-3 3-5z" fill="#ffd24a"/><path d="M6 17h8v2H6z" fill="#f0e8dc"/>`],
  ["Distant Light", svg`<path d="M9 0v17M1 8h16M3 2l12 12M15 2L3 14" stroke="#d8a428" stroke-width="2"/><circle cx="9" cy="8" r="5.500" fill="#f0c43c"/><path d="M12 12l6 6M16 10l3 4M10 14l2 5" stroke="#e6d060" stroke-width="2"/>`],
  ["Environment Light", svg`<circle cx="10" cy="10" r="9.500" fill="#d8c41e"/><ellipse cx="10" cy="9" rx="7" ry="4" fill="#f2eeb0"/><circle cx="10" cy="9" r="3" fill="#6a7488"/><path d="M2 14h16" stroke="#8a7c10" stroke-width="1.500"/>`],
  ["Sky Light", svg`<path d="M9 1h8v7H7z" fill="#6e93c8"/><circle cx="6" cy="4" r="3" fill="#e0a83c"/><path d="M1 15c0-4 3-6 6-5 3-4 9-1 9 2 3 0 3 6 0 6H4c-2 0-3-1-3-3z" fill="#efeadc"/><path d="M13 7l5 5-3 2z" fill="#333"/><path d="M3 15h12" stroke="#d4b85a" stroke-width="1.500"/>`],
  ["GI Light", svg`<circle cx="10" cy="10" r="9.500" fill="#cfc0bc"/><circle cx="9" cy="8" r="6" fill="#efeae2"/><path d="M3 14c4 5 10 5 14 0" stroke="#c8a4b8" stroke-width="2" fill="none"/>`],
  ["Caustic Light", svg`<path d="M3 1l6-1 1 10 8 4-2 5-9-3-3-5z" fill="#8a9cc0"/><path d="M4 2l4-1 1 9-3 3z" fill="#d5def0"/>`],
  ["Portal Light", svg`<path d="M2 3l5-2 11 10 1 7-7 0L3 12z" fill="#8f8d28"/><path d="M4 3l4 0 9 9-3 2z" fill="#c4c244"/>`],
  ["Ambient Light", bulb("#d5dcdc")],
  ["Stereo Camera", svg`<path d="M1 5h18v9H1z" fill="#26292c"/><circle cx="6" cy="10" r="3.500" fill="#8a9094"/><circle cx="14" cy="10" r="3.500" fill="#8a9094"/><circle cx="6" cy="10" r="1.500" fill="#111"/><circle cx="14" cy="10" r="1.500" fill="#111"/><path d="M3 3h14v2H3z" fill="#999"/>`],
  ["VR Camera", svg`<path d="M1 9l10-3 8 4-1 5-9 4-7-4z" fill="#5b5f63"/><path d="M4 7l7-5 4 3" fill="none" stroke="#777c80" stroke-width="1.500"/><path d="M4 11l6-2 5 3-6 3z" fill="#23262a"/>`],
];

const leftShelf = ["Model", "Polygon", "Deform", "Texture", "Rigging", "Characters", "Constraints", "Hair Utils", "Guide Process", "Terrain FX", "Simple FX", "Cloud FX", "Volume", "SideFX Labs"];
const rightShelf = ["Lights and Cameras", "Collisions", "Particles", "Grains", "Vellum", "Rigid Bodies", "Particle Fluids", "Viscous Fluids", "Oceans", "Pyro FX", "FEM", "Wires", "Crowds", "Drive Simulation"];
const leftPaneTabs = ["Animation Editor", "Render View", "Composite View", "Motion FX View", "Geometry Spreadsheet"];
const rightPaneTabs = ["Parameters", "Take List", "Performance Monitor"];
const hints = ["Left mouse tumbles.", "Middle pans.", "Right dollies.", "Ctrl+Alt+Left box-zooms.", "Ctrl+Right zooms.", "Spacebar-Ctrl-Left tilts.", "Hold L for alternate tumble,"];

const pic = (art: Art, box = 18, cls = "pic") => html`<svg class=${cls} viewBox=${`0 0 ${box} ${box}`} aria-hidden="true">${art}</svg>`;
const geoIcon = svg`<path d="M1 3v9c0 2 7 2 7 0V3z" fill="#4d7296"/><ellipse cx="4.500" cy="3" rx="3.500" ry="1.600" fill="#9cc0dc"/><circle cx="13" cy="8" r="5" fill="#cf2f24"/><path d="M9 6l5 10H4z" fill="#f2d83a"/><path d="M9 6l0 10H4z" fill="#fbf0a0"/>`;
const drop = svg`<path d="M12 14h6l-3 4z" fill="#a0a0a0"/>`;

/* ---------- construction plane ---------- */
const project = (x: number, z: number): [number, number] => {
  const w = 1 - 0.1346 * (x + z);
  return [561 + (185.2 * (x - z)) / w, -337 + 735.3 / w];
};
const planeLines = () => {
  const out: TemplateResult[] = [];
  for (let i = -80; i <= 30; i++) {
    const c = i / 5;
    const near = Math.min(18, 6.2 - c);
    const far = -24;
    const major = i % 5 === 0;
    const [ax, ay] = project(c, near), [bx, by] = project(c, far);
    for (const m of [1, -1]) {
      const fx = (v: number) => (m === 1 ? v : 1122 - v);
      out.push(svg`<line x1=${fx(ax)} y1=${ay} x2=${fx(bx)} y2=${by} stroke=${major ? "#66757b" : "#6b7c83"} stroke-width=${major ? 2 : 1} stroke-opacity=${major ? 0.42 : 0.42}/>`);
    }
  }
  return out;
};
const planeLabels: [string, number, number, number, number, string][] = [
  ["0", 563, 390, 18, 76, "#b06a72"], ["0", 563, 409, 18, 104, "#5c6e9e"], ["1", 344, 526, 22, 118, "#66719b"],
  ["2", 46, 686, 30, 140, "#66719b"], ["-1", 396, 304, 14, 150, "#80727c"], ["-2", 267, 237, 13, 175, "#75717c"],
  ["-3", 161, 181, 11, 178, "#6b6c78"], ["-4", 75, 136, 9, 178, "#646d79"], ["-1", 726, 321, 15, 200, "#5f6d8c"],
];

@customElement("pane-tabs")
class PaneTabs extends LitElement {
  @property({ attribute: false }) tabs: string[] = [];
  @property({ attribute: false }) current = "";
  @property({ type: Boolean }) tools = false;
  static styles = css`
    :host { display: flex; height: 20px; background: #2a2a2b; color: #c9c9c9; font-size: 10px; }
    button { font: inherit; color: inherit; background: none; border: 0; padding: 0; white-space: nowrap; line-height: 20px; }
    .tab { display: flex; align-items: center; gap: 7px; padding: 0 5px 0 4px; border-right: 2px solid #161616; }
    .tab:first-child { padding-left: 1px; }
    .current { background: #484848; font-style: italic; gap: 11px; }
    .tab.current:first-child { padding-left: 7px; }
    .close { font-weight: 700; font-size: 9px; font-style: normal; }
    .add { padding: 0 8px; font-size: 17px; font-weight: 700; }
    .end { margin-left: auto; display: flex; align-items: center; gap: 10px; padding-right: 6px; }
    .box { width: 10px; height: 9px; background: #dcdcdc; }
    .down { border: 3px solid transparent; border-top: 6px solid #dcdcdc; border-bottom: 0; }
  `;
  render() {
    return html`${this.tabs.map((t) => html`<div class=${classMap({ tab: true, current: t === this.current })}>
        <button>${t}</button><button class="close" aria-label=${"Close " + t}>×</button></div>`)}
      <button class="add" aria-label="New tab">+</button>
      ${this.tools ? html`<div class="end"><span class="box"></span><span class="down"></span></div>` : ""}`;
  }
}

@customElement("tool-shelf")
class ToolShelf extends LitElement {
  @property({ attribute: false }) tabs: string[] = [];
  @property({ attribute: false }) tools: [string, Art][] = [];
  @property({ type: Boolean }) first = false;
  static styles = css`
    :host { display: flex; flex-direction: column; min-width: 0; overflow: hidden; color: #c4c4c4; font-size: 9px; }
    button { font: inherit; color: inherit; background: none; border: 0; padding: 0; }
    .tabs { display: flex; height: 20px; background: #262627; border-top: 1px solid #454545; box-sizing: border-box; }
    .tab { padding: 0 6px 0 5px; white-space: nowrap; border-right: 2px solid #0e0e0e; border-bottom: 1px solid #111; flex: none; }
    .tab.on { background: #474747; border-bottom-color: #474747; }
    .add { padding: 0 8px; font-size: 17px; font-weight: 700; line-height: 18px; }
    .down { margin: 8px 5px 0 auto; border: 3px solid transparent; border-top: 6px solid #dcdcdc; border-bottom: 0; height: 0; }
    .tools { display: flex; height: 41px; background: linear-gradient(#474647, #3a3a3a 70%); padding-left: 16px; }
    .tools.first { padding: 0; margin-left: -4px; }
    .tool { display: flex; flex-direction: column; align-items: center; min-width: 41px; padding: 3px 4px 0 3px; box-sizing: border-box; flex: none; line-height: 9px; }
    .tool.two { width: 67px; padding: 2px 6px 0; }
    .label { flex: 1; display: flex; align-items: center; white-space: nowrap; text-align: center; }
    .two .label { white-space: normal; }
    .pic { width: 20px; height: 20px; flex: none; }
  `;
  render() {
    const two = ["Platonic Solids", "Geometry Light", "Environment Light", "Stereo Camera"];
    return html`<div class="tabs">
        ${this.tabs.map((t) => html`<button class=${classMap({ tab: true, on: t === "Lights and Cameras" })}>${t}</button>`)}
        <button class="add" aria-label="Add shelf">+</button>${this.first ? html`<span class="down"></span>` : ""}
      </div>
      <div class=${classMap({ tools: true, first: this.first })}>
        ${this.tools.map(([n, a]) => html`<button class=${classMap({ tool: true, two: two.includes(n) })}>${pic(a, 20)}<span class="label">${n}</span></button>`)}
      </div>`;
  }
}

@customElement("app-root")
class AppRoot extends LitElement {
  static styles = css`
    :host { display: block; font-family: "Noto Sans CJK SC", "Noto Sans", sans-serif; color: #cfcfcf; font-size: 12px; }
    * { box-sizing: border-box; }
    button, input, select { font: inherit; color: inherit; background: none; border: 0; padding: 0; margin: 0; }
    select { appearance: none; }
    svg { display: block; }
    .page { position: relative; display: flex; flex-direction: column; min-height: 100vh; background: #3a3a3a; border-top: 3px solid #fbfbfb; overflow: hidden; }

    .menubar { display: flex; align-items: center; height: 27px; background: linear-gradient(#3c3b3d, #363637); padding: 0 0 0 1px; }
    .menubar nav { display: flex; gap: 9px; width: 182px; }
    .desk { display: flex; align-items: center; gap: 5px; width: 104px; height: 24px; padding-left: 5px; background: #4a494b; }
    .desk svg { width: 15px; height: 15px; flex: none; }
    .desk select { flex: 1; }
    .spin { width: 22px; height: 24px; margin-right: 6px; background: #2e2e2f; display: flex; flex-direction: column; align-items: center; justify-content: center; gap: 3px; }
    .up { border: 3px solid transparent; border-bottom: 6px solid #9a9a9a; border-top: 0; }
    .dn { border: 3px solid transparent; border-top: 6px solid #9a9a9a; border-bottom: 0; }

    .shelves { display: flex; border-bottom: 1px solid #0c0c0c; }
    .shelves .one { width: 868px; flex: none; }
    .shelves .two { flex: 1; }
    .shelf-grip { width: 11px; background: #3c3c3c; border: solid #0c0c0c; border-width: 0 1px; display: flex; align-items: center; justify-content: center; }
    .dots { width: 6px; height: 16px; background: radial-gradient(circle, #0a0a0a 1px, transparent 1px) 0 0 / 3px 3px; }

    .work { display: flex; flex: 1; min-height: 0; }
    .scene { width: 1205px; flex: none; display: flex; flex-direction: column; border-right: 1px solid #0d0d0d; }
    .side { flex: 1; min-width: 0; margin-left: 6px; display: flex; flex-direction: column; }
    .path { display: flex; align-items: center; height: 38px; padding: 6px 0 7px; background: linear-gradient(#4a4a4a, #3b3b3b 60%); border-bottom: 2px solid #191919; font-size: 11px; flex: none; }
    .field { display: flex; align-items: center; height: 25px; background: #3a3a3a; border: 1px solid #101010; border-top-color: #565656; }
    .scene .field { width: 1068px; border-left: 0; }
    .side .field { flex: 1; border-right: 0; border-left-color: #101010; padding-left: 4px; gap: 5px; }
    .chev { width: 6px; height: 24px; margin: 0 6px 0 5px; fill: none; stroke: #111; stroke-width: 1; flex: none; }
    .side .chev { margin: 0 0 0 1px; }
    .ico { width: 18px; height: 18px; flex: none; }
    .field .drop { margin-left: auto; width: 18px; height: 23px; background: #2f2f2f; display: flex; align-items: center; justify-content: center; }
    .name { margin-left: 5px; }
    .side .name { margin-left: 0; }
    .path-tools { display: flex; align-items: center; gap: 6px; padding-left: 9px; }
    .path-tools .far { margin-left: 10px; }
    .nav { display: flex; gap: 6px; padding: 0 8px 0 4px; }

    .tools { display: flex; align-items: center; height: 32px; background: #2b2b2c; border-top: 1px solid #4c4c4c; border-bottom: 1px solid #080808; padding: 0 4px 0 449px; flex: none; }
    .tools button { width: 20px; height: 25px; display: flex; align-items: center; justify-content: center; margin-right: 13px; }
    .tools .sep { width: 1px; height: 26px; background: #555; margin-right: 6px; }
    .tools .tight { margin-right: 5px; }
    .tools .on { background: #5a6e86; outline: 1px solid #7f95ad; }
    .tools .last { margin-left: auto; margin-right: 4px; }
    .tools .help { margin: 0; }

    .view { position: relative; flex: 1; overflow: hidden; background: linear-gradient(#6a7f8d, #768b97 20%, #8498a2 40%, #98a7ae 56%, #a9b4ba 72%, #b4bdc0 86%, #bfc7c7); border-right: 26px solid #333; }
    .plane { position: absolute; left: 0; top: 0; width: 1178px; height: 796px; font-family: "Open Sans", sans-serif; }
    .hint { position: absolute; left: 69px; bottom: 6px; display: flex; gap: 8px; color: #23282b; font-size: 10px; line-height: 18px; white-space: nowrap; }

    .params { height: 380px; flex: none; background: #3a3a3a; padding: 178px 0 0 291px; color: #808080; font-size: 11px; line-height: 22px; }
    .split { height: 9px; background: linear-gradient(#6a6a6a 1px, #444 1px); border-bottom: 1px solid #111; padding-left: 298px; flex: none; }
    .split i { display: block; width: 20px; height: 6px; margin-top: 1px; background: radial-gradient(circle, #999 1px, transparent 1px) 0 0 / 3px 3px; }
    .nettabs { padding-left: 293px; background: #2a2a2b; flex: none; }
    .netpath { height: 36px; padding: 6px 0; background: #444; border-bottom: 1px solid #0c0c0c; flex: none; }
    .netpath div { height: 25px; background: #3a3a3a; border: 1px solid #161616; border-top-color: #5a5a5a; padding-left: 158px; line-height: 22px; }
    .nettools { display: flex; align-items: center; height: 27px; background: #363637; border-bottom: 1px solid #1a1a1a; padding-left: 292px; gap: 8px; flex: none; overflow: hidden; }
    .nettools button { line-height: 24px; margin-right: 3px; }
    .nettools svg { width: 16px; height: 16px; flex: none; }
    .nettools .gap { margin-left: 7px; }
    .net { flex: 1; background: #322f33; color: #474548; font-size: 19px; padding: 10px 0 0 299px; display: flex; flex-direction: column; overflow: hidden; border-bottom: 1px solid #6a6a6a; white-space: nowrap; }
    .net p { margin: 0; line-height: 28px; }
    .net .row { display: flex; justify-content: space-between; padding-right: 3px; margin-bottom: 137px; line-height: 32px; }
    .net .row b { padding-top: 5px; }
    .net .op { margin: auto 0 2px -6px; color: #d5d5d5; font-size: 15px; line-height: 26px; }

    .time { display: grid; grid-template-columns: 139px 1fr 158px; height: 76px; background: #2d2d2e; border-top: 1px solid #1c1c1c; flex: none; font-family: "DejaVu Sans Mono", monospace; font-size: 11px; color: #f0f0f0; }
    .left { display: flex; flex-direction: column; gap: 7px; padding-top: 9px; }
    .line { display: flex; align-items: center; }
    .left button { height: 29px; width: 26px; margin-right: 1px; background: #414143; border: 1px solid #4b4b4c; border-right-color: #141414; border-bottom-color: #141414; display: flex; align-items: center; justify-content: center; }
    .left .half { width: 13px; }
    .left .off { width: 22px; height: 24px; }
    .left .clock { height: 25px; margin-right: 4px; }
    .left svg { width: 18px; height: 18px; flex: none; }
    .left .half svg { width: 11px; height: 12px; }
    .line .frame { width: 46px; height: 29px; margin: 0 3px 0 4px; background: #121214; padding-left: 3px; }
    .mid { display: flex; flex-direction: column; }
    .ruler { width: 100%; height: 46px; overflow: visible; }
    .range { display: flex; align-items: center; height: 24px; gap: 3px; }
    .range input { width: 41px; height: 23px; background: #262627; padding-left: 3px; flex: none; }
    .range .dark { background: #121214; }
    .bar { flex: 1; height: 13px; display: flex; align-items: center; }
    .bar::before { content: ""; border: 6px solid transparent; border-left: 7px solid #a0a0a0; border-right: 0; }
    .bar::after { content: ""; flex: 1; height: 2px; background: #6c6c6c; }
    .right { display: flex; padding: 8px 0 0 3px; font-family: "Noto Sans CJK SC", sans-serif; }
    .key { width: 40px; height: 40px; margin-top: 8px; border-radius: 50%; background: #333335; border: 1px solid #252526; display: flex; align-items: center; justify-content: center; flex: none; }
    .key svg { width: 22px; height: 22px; }
    .pick { width: 17px; height: 20px; margin: 18px 11px 0 -3px; background: #3a3a3b; display: flex; align-items: center; justify-content: center; flex: none; }
    .stack { display: flex; flex-direction: column; gap: 7px; flex: none; }
    .stack button { height: 24px; background: #444446; border: 1px solid #505050; border-bottom-color: #151515; white-space: nowrap; text-align: left; line-height: 21px; }
    .sq { width: 23px; display: flex; align-items: center; justify-content: center; }
    .sq svg { width: 17px; height: 17px; }
    .texts { margin-left: 5px; flex: 1; min-width: 0; font-size: 10px; color: #d6d6d6; }
    .stack .texts-row { border-right: 0; padding-left: 9px; }
    .stack .wide { padding-left: 16px; }

    .status { display: flex; justify-content: flex-end; height: 27px; background: #19191a; flex: none; }
    .status div { display: flex; align-items: center; gap: 10px; width: 76px; padding-left: 4px; background: #363637; }
    .status button { align-self: stretch; flex: 1; background: #454546; padding-left: 12px; text-align: left; font-size: 11px; }
    .status svg { width: 18px; height: 18px; flex: none; }

    .results { position: absolute; left: 773px; top: 183px; bottom: 3px; width: 594px; display: grid; grid-template-columns: 178px 198px 1fr 11px; background: #393939; border: 1px solid #141414; border-top-color: #868686; border-left-color: #8b8b8b; box-shadow: 1px 1px #0d0d0d; }
    .col { display: grid; grid-template-rows: repeat(42, minmax(0, 1fr)); margin: 0; padding: 0 0 0 7px; list-style: none; }
    .col button { display: flex; align-items: center; gap: 3px; height: 100%; line-height: 21px; white-space: nowrap; }
    .col .pic { width: 18px; height: 18px; flex: none; }
    .scroll { display: flex; flex-direction: column; background: #262627; border-left: 1px solid #303030; }
    .thumb { flex: 719 0 0; background: linear-gradient(90deg, #474747, #565656); display: flex; align-items: center; justify-content: center; }
    .track { flex: 140 0 0; }
    .arrows { height: 30px; display: flex; flex-direction: column; align-items: center; justify-content: space-around; background: #3c3c3c; }

    .tab-menu { position: absolute; left: 1374px; top: 161px; width: 129px; bottom: 5px; display: flex; flex-direction: column; background: #3a3a3a; border: solid #8f8f8f; border-width: 1px 0 0 1px; box-shadow: 1px 1px #1d1d1d; }
    h2 { margin: 0; font: inherit; text-align: center; line-height: 21px; height: 21px; background: #474747; color: #c9c9c9; flex: none; }
    .search { display: flex; align-items: center; height: 27px; padding-left: 3px; gap: 4px; border-bottom: 2px solid #858585; flex: none; }
    .search svg { width: 19px; height: 19px; flex: none; }
    .search input { width: 80px; font-size: 11px; outline: 0; }
    .cats { flex: 1; min-height: 0; display: grid; grid-template-rows: repeat(37, minmax(0, 1fr)); margin: 0; padding: 0; list-style: none; }
    .entry { display: flex; align-items: center; justify-content: space-between; width: 100%; height: 100%; padding: 0 5px 0 8px; line-height: 21px; text-align: left; }
    .entry::after { content: ""; border: 5px solid transparent; border-left: 9px solid #a3a3a3; border-right: 0; }
    .foot { margin-top: 6px; border-top: 2px solid #858585; padding-top: 5px; flex: none; }
    .foot .entry { height: 23px; }
    .foot h2 { height: 20px; line-height: 20px; }
    .none { height: 23px; padding-left: 8px; color: #a0a0a0; line-height: 22px; }

    .cursor { position: absolute; left: 1455px; top: 190px; width: 16px; height: 24px; }
    .upload { position: absolute; right: 11px; top: 6px; width: 104px; height: 26px; display: flex; border-radius: 3px; overflow: hidden; background: #d7f0fd; color: #4aa9e8; font-size: 12px; align-items: center; border: 1px solid #7cc4f5; }
    .upload span { flex: 1; text-align: center; }
    .upload svg { width: 29px; height: 24px; background: #2f9bf5; flex: none; }
  `;

  private ruler() {
    const at = (f: number) => `${((f - 1) / 239) * 100}%`;
    const ticks: TemplateResult[] = [];
    for (let f = 6; f <= 240; f += 6) {
      const big = f % 24 === 0;
      ticks.push(svg`<line x1=${at(f)} x2=${at(f)} y1=${big ? 17 : 20} y2=${big ? 34 : 31} stroke=${big ? "#c8c8c8" : "#8c8c8c"}/>`);
    }
    return html`<svg class="ruler" aria-hidden="true">
      <line x1="0" x2="100%" y1="25.5" y2="25.5" stroke="#a8a8a8" stroke-width="2"/>${ticks}
      ${[24, 48, 72, 96].map((f) => svg`<text x=${at(f)} y="11" dx="-1" font-size="9" fill="#9a9a9a" font-family="Noto Sans CJK SC">${f}</text>`)}
      <text x=${at(240)} y="11" dx="-1" font-size="9" fill="#9a9a9a" font-family="Noto Sans CJK SC">2</text>
      <path d="M1 26V4h23v17H6z" fill="#050505" stroke="#f2f2f2" stroke-width="1.500"/>
      <text x="9" y="17" font-size="12" fill="#fff">1</text></svg>`;
  }

  render() {
    return html`<div class="page">
      <header class="menubar">
        <nav>${["der", "Assets", "Windows", "Help"].map((m) => html`<button>${m}</button>`)}</nav>
        <div class="desk">${pic(svg`<path d="M1 1h16v16H1zM7 1v16M7 6h5v11M12 10h5" fill="none" stroke="#b4b4b4" stroke-width="1.500"/>`, 18, "")}
          <select aria-label="Desktop"><option>Build</option></select></div>
        <div class="spin"><i class="up"></i><i class="dn"></i></div>
        <div class="desk">${pic(svg`<circle cx="9" cy="9" r="6" fill="none" stroke="#b4b4b4" stroke-width="1.500"/><circle cx="9" cy="9" r="2.500" fill="#c4c4c4"/><path d="M9 0v4M9 14v4M0 9h4M14 9h4" stroke="#b4b4b4" stroke-width="1.500"/>`, 18, "")}
          <select aria-label="Radial menu"><option>Main</option></select></div>
        <div class="spin"><i class="up"></i><i class="dn"></i></div>
      </header>

      <div class="shelves">
        <tool-shelf class="one" first .tabs=${leftShelf} .tools=${leftTools}></tool-shelf>
        <div class="shelf-grip"><i class="dots"></i></div>
        <tool-shelf class="two" .tabs=${rightShelf} .tools=${rightTools}></tool-shelf>
      </div>

      <main class="work">
        <section class="scene">
          <pane-tabs tools .tabs=${leftPaneTabs}></pane-tabs>
          <div class="path">
            <div class="field"><span>bj</span><svg class="chev" viewBox="0 0 6 24"><path d="M0 0l5 12-5 12"/></svg>
              ${pic(geoIcon, 18, "ico")}<span class="name">geo1</span><span class="drop"><i class="dn"></i></span></div>
            <div class="path-tools">
              ${pic(svg`<path d="M1 9h7" stroke="#ddd" stroke-width="1.500"/><path d="M7 4h2l1 3h4V4h2v10h-2v-3h-4l-1 3H7z" fill="#ddd"/>`, 18, "ico")}
              ${pic(svg`<circle cx="9" cy="9" r="8" fill="none" stroke="#7f98b4" stroke-width="1.200"/><circle cx="9" cy="9" r="5" fill="#2f4660" stroke="#6f8cae"/><circle cx="9" cy="9" r="2" fill="#9db8d6"/>`, 18, "ico")}
              ${pic(svg`<path d="M1 5l7-3 7 2v9l-7 4-7-3z" fill="#6d7f92"/><path d="M1 5l7 2 7-3-7-2z" fill="#c3ced9"/><path d="M8 7v10l7-4V4z" fill="#4c5d70"/>${drop}`, 18, "ico far")}
              ${pic(svg`<path d="M3 1h4v6l2 8H1l2-8z" fill="#54585c" stroke="#8b8f93" stroke-width="1.500"/><circle cx="12" cy="8" r="5" fill="#5f89b8"/><circle cx="11" cy="6" r="2" fill="#9cbde0"/>${drop}`, 18, "ico")}
              ${pic(svg`<path d="M1 1h15v15H1z" fill="#dcdcdc"/>${drop}`, 18, "ico")}
            </div>
          </div>
          <div class="tools">
            <button aria-label="Select">${pic(svg`<ellipse cx="9" cy="12" rx="7" ry="3.500" fill="none" stroke="#6f86a8" stroke-width="1.500"/><path d="M7 2l6 7-3 .3 1 3-2 1-1.500-3L6 12z" fill="#f2f2f2"/>${drop}`, 18, "ico")}</button>
            <button aria-label="Lasso">${pic(svg`<path d="M2 2l12 12" stroke="#5a78b0" stroke-width="2"/><path d="M6 4l6 7-3 .3 1 3-2 0-1-3-2 1z" fill="#e8e8e8"/>${drop}`, 18, "ico")}</button>
            <button class="tight" aria-label="Secure">${pic(svg`<path d="M1 5l9-2v3l-9 2z" fill="#9a7c6a"/><path d="M2 11c4 3 8 2 12-1v4c-4 2-8 3-12 1z" fill="#7d93b4"/><path d="M10 1l5 6-3 0 1 3-2 0z" fill="#f2f2f2"/>${drop}`, 18, "ico")}</button>
            <i class="sep"></i>
            <button class="on tight" aria-label="Snap" aria-pressed="true">${pic(svg`<g fill="#e6e2cc"><circle cx="6" cy="5" r="3"/><circle cx="12.500" cy="5" r="3"/><circle cx="5" cy="13" r="3"/><circle cx="13" cy="12" r="3.500"/></g><path d="M6 5l6 7M12 5l-7 8" stroke="#6b6a5c" stroke-width="1.500"/>`, 18, "ico")}</button>
            <button class="tight" aria-label="Zoom">${pic(svg`<rect x="3" y="4" width="8" height="8" fill="#3b5878" stroke="#e2e2e2" stroke-width="1.500"/><path d="M7 6v4M5 8h4" stroke="#fff"/><path d="M12 12l4 4" stroke="#6c7c8c" stroke-width="1.500"/>`, 18, "ico")}</button>
            <i class="sep"></i>
            <button class="tight" aria-label="Lock">${pic(svg`<circle cx="9" cy="9" r="6.500" fill="none" stroke="#5c2f33" stroke-width="1.500"/><rect x="6" y="7" width="6" height="4" fill="none" stroke="#5c2f33"/>`, 18, "ico")}</button>
            <i class="sep"></i>
            <button class="tight" aria-label="Bug">${pic(svg`<path d="M2 3l14 3M16 3L2 6M3 1l5 4M15 1l-5 4" stroke="#cfd2cf" stroke-width="1.500"/><circle cx="9" cy="11.500" r="5.500" fill="#c9ceca"/><circle cx="9" cy="11.500" r="3" fill="#54685c"/><circle cx="8" cy="10.500" r="1" fill="#fff"/>`, 18, "ico")}</button>
            <button aria-label="Settings">${pic(svg`<rect x="2" y="2" width="14" height="15" fill="#f0f0f0"/><circle cx="9" cy="9.500" r="2.500" fill="none" stroke="#222" stroke-width="2"/><path d="M9 4.500v10M4 9.500h10M5.500 6l7 7M12.500 6l-7 7" stroke="#222"/><circle cx="9" cy="9.500" r="1.200" fill="#f0f0f0"/>`, 18, "ico")}</button>
            <button class="last" aria-label="Views">${pic(svg`<g fill="#a9bfd6"><circle cx="5" cy="3" r="2"/><path d="M2 7h6v-2H2z"/><circle cx="5" cy="11" r="2"/><path d="M2 16h6v-3H2z"/><circle cx="13" cy="6" r="2"/><path d="M10 11h6V8h-6z"/></g>${drop}`, 18, "ico")}</button>
            <button class="help" aria-label="Help">${pic(svg`<circle cx="9" cy="9" r="7" fill="none" stroke="#e4e4e4" stroke-width="1.500"/><text x="9" y="13.500" font-size="12" font-weight="700" text-anchor="middle" fill="#f0f0f0">?</text>`, 18, "ico")}</button>
          </div>
          <div class="view">
            <svg class="plane" viewBox="0 0 1178 796" preserveAspectRatio="xMinYMin slice">
              ${planeLines()}
              ${planeLabels.map(([t, x, y, s, r, c]) => svg`<text font-size=${s} font-weight="600" fill=${c} opacity=".75" text-anchor="middle" dominant-baseline="central" transform=${`translate(${x} ${y}) rotate(${r})`}>${t}</text>`)}
            </svg>
            <div class="hint">${hints.map((h) => html`<span>${h}</span>`)}</div>
          </div>
        </section>

        <section class="side">
          <pane-tabs .tabs=${rightPaneTabs} .current=${"Parameters"}></pane-tabs>
          <div class="path">
            <div class="nav">
              ${pic(svg`<path d="M1 8l7-6v4h7v5H8v4z" fill="#d5d5d5"/><path d="M12 12l5 3-5 3z" fill="#8a8a8a"/>`, 18, "ico")}
              ${pic(svg`<path d="M17 9l-7-6v4H4v4h6v4z" fill="#565656"/>`, 18, "ico")}
            </div>
            <div class="field">${pic(svg`<path d="M1 4l15-3v4L1 7z" fill="#2a2c2e"/><path d="M3 4l3-1 1 2-3 1zM9 3l3-1 1 2-3 1z" fill="#9aa0a4"/><path d="M2 7h14v10H2z" fill="#6a7074"/><path d="M4 11h3M9 11h5M4 14h8" stroke="#b8bec2"/>`, 18, "ico")}<span>obj</span>
              <svg class="chev" viewBox="0 0 6 24"><path d="M0 0l5 12-5 12"/></svg>${pic(geoIcon, 18, "ico")}<span class="name">geo1</span></div>
          </div>
          <div class="params">rator Selected</div>
          <div class="split"><i></i></div>
          <pane-tabs class="nettabs" .tabs=${["rowser"]}></pane-tabs>
          <div class="netpath"><div>1</div></div>
          <div class="nettools"><button>Help</button>
            ${pic(svg`<path d="M2 2l14 14M16 2L2 16" stroke="#cfcfcf" stroke-width="2.500"/><circle cx="3" cy="3" r="2.500" fill="#cfcfcf"/><path d="M13 1l4 4" stroke="#efefef" stroke-width="3"/>`, 18, "")}
            ${pic(svg`<path d="M4 2v13h5M4 8h5" fill="none" stroke="#c4c4c4" stroke-width="1.500"/><path d="M2 1h5v3H2zM9 6h6v4H9zM9 12h6v5H9z" fill="#c4c4c4"/>`, 18, "")}
            ${pic(svg`<rect x="1" y="1" width="16" height="16" fill="#dedede"/><path d="M1 6h16M1 11h16" stroke="#aaa"/>`, 18, "")}
            ${pic(svg`<rect width="18" height="18" fill="#f0f0ea"/><path d="M2 2h4v3H2z" fill="#2a2a2a"/><path d="M7 2h4v3H7z" fill="#b33"/><path d="M12 2h4v3h-4z" fill="#e08a3a"/><path d="M2 7h4v4H2z" fill="#b8443a"/><path d="M7 7h4v4H7z" fill="#e0c040"/><path d="M12 7h4v4h-4z" fill="#5a9a4a"/><path d="M2 12h4v4H2z" fill="#d8a8a0"/><path d="M7 12h4v4H7z" fill="#5a9ac8"/><path d="M12 12h4v4h-4z" fill="#9ac8b8"/>`, 18, "gap")}
            ${pic(svg`<rect x="1" y="1" width="16" height="16" fill="none" stroke="#a4a4a4" stroke-width="1.500"/><path d="M4 4h4v3H4zM10 4h4v3h-4zM4 9h4v2H4zM10 9h4v2h-4zM4 13h4v2H4zM10 13h4v2h-4z" fill="#8f8f8f"/>`, 18, "")}
            ${pic(svg`<rect x="1" y="1" width="16" height="16" fill="#e4e4e4"/><path d="M3 4h7v4H3zM8 10h7v4H8z" fill="#e4e4e4" stroke="#222" stroke-width="1.500"/>`, 18, "gap")}
            ${pic(svg`<path d="M1 2l16-1v12l-5 4H1z" fill="#ecd93a"/><path d="M12 17v-5l5 1z" fill="#a8961c"/><path d="M4 5h9M4 8h8M4 11h6" stroke="#8a7c1c"/>`, 18, "")}
            ${pic(svg`<rect width="18" height="18" fill="#e8eef2"/><path d="M2 3h16v7H2z" fill="#3f9ad0"/>`, 18, "")}
          </div>
          <div class="net">
            <div class="row"><span>Edition</span><b>Ge</b></div>
            <p>Network</p><p>Add Geometry</p>
            <div class="op">ld Operator</div>
          </div>
        </section>
      </main>

      <section class="time">
        <div class="left">
          <div class="line">
            <button aria-label="Play">${pic(svg`<path d="M4 2l11 7-11 7z" fill="#e8e8e8"/>`, 18, "")}</button>
            <button aria-label="Next key">${pic(svg`<path d="M0 3l7 6-7 6zM7 3l7 6-7 6zM14 3h3v12h-3z" fill="#e8e8e8"/>`, 18, "")}</button>
            <input class="frame" aria-label="Current frame" value="1">
            <button class="half" aria-label="Step back">${pic(svg`<path d="M10 2v14L1 9zM13 2h3v14h-3z" fill="#e0e0e0"/>`, 18, "")}</button>
            <button class="half" aria-label="Step forward">${pic(svg`<path d="M8 2v14l9-7zM2 2h3v14H2z" fill="#e0e0e0"/>`, 18, "")}</button>
          </div>
          <div class="line">
            <button class="clock" aria-label="Realtime">${pic(svg`<circle cx="9" cy="9" r="7.500" fill="#222" stroke="#e4e4e4" stroke-width="1.500"/><circle cx="9" cy="9" r="5" fill="none" stroke="#cfcfcf"/><path d="M9 4v5h4" stroke="#fff" stroke-width="1.500" fill="none"/>`, 18, "")}</button>
            <button class="off" disabled aria-label="Range start">${pic(svg`<path d="M4 4h2v10H4z" fill="#4a6440"/><path d="M14 4v10L7 9z" fill="#606060"/>`, 18, "")}</button>
            <button class="off" disabled aria-label="Range end">${pic(svg`<path d="M12 4h2v10h-2z" fill="#4a6440"/><path d="M4 4v10l7-5z" fill="#606060"/>`, 18, "")}</button>
          </div>
        </div>
        <div class="mid">
          ${this.ruler()}
          <div class="range">
            <input aria-label="Start" value="1"><input class="dark" aria-label="Range from" value="1">
            <i class="bar"></i>
            <input class="dark" aria-label="Range to" value="240"><input aria-label="End" value="240">
          </div>
        </div>
        <div class="right">
          <button class="key" aria-label="Set key">${pic(svg`<circle cx="12" cy="6" r="3.500" fill="none" stroke="#7d7d80" stroke-width="2"/><path d="M9.500 8.500L3 15M5 13l2 2" stroke="#7d7d80" stroke-width="2"/>`, 18, "")}</button>
          <button class="pick" aria-label="Key options"><i class="dn"></i></button>
          <div class="stack">
            <button class="sq" aria-label="Channels">${pic(svg`<rect x="1" y="1" width="12" height="16" fill="#b8b48a"/><path d="M3 4h5M3 8h4M3 12h5" stroke="#333" stroke-width="1.500"/><circle cx="11.500" cy="8" r="4" fill="#333" stroke="#eee" stroke-width="1.800"/>`, 18, "")}</button>
            <button class="sq" aria-label="Curves">${pic(svg`<rect y="2" width="18" height="14" fill="#080808"/><path d="M0 9h18" stroke="#999"/><path d="M2 11c2-6 4-5 6-1s4 0 6-4l3 5" fill="none" stroke="#ddd"/>`, 18, "")}</button>
          </div>
          <div class="stack texts"><button class="texts-row wide">0 keys, 0/</button><button class="texts-row">Key All Cha</button></div>
        </div>
      </section>
      <footer class="status"><div>
        ${pic(svg`<path d="M2 10c0-8 13-9 14-2 1 4-2 6-5 6l-1 2-3-2c-3 0-5-1-5-4z" fill="#c9c9c6"/><path d="M13 12l5 3-5 3z" fill="#777"/>`, 18, "")}
        ${pic(svg`<path d="M3 9a6 6 0 0110-4M15 9a6 6 0 01-10 4" fill="none" stroke="#5a5a5a" stroke-width="2"/><path d="M11 6h5V1zM7 12H2v5z" fill="#5a5a5a"/>`, 18, "")}
        <button>A</button></div></footer>

      <section class="results">
        ${columns.map((c) => html`<ul class="col">${c.map(([n, k]) => html`<li><button>${pic(icons[k])}${n}</button></li>`)}</ul>`)}
        <div class="scroll"><div class="thumb"><i class="dots"></i></div><div class="track"></div><div class="arrows"><i class="up"></i><i class="dn"></i></div></div>
      </section>

      <section class="tab-menu">
        <h2>TAB Menu</h2>
        <label class="search">${pic(svg`<path d="M11 11l6 6" stroke="#d8d8d8" stroke-width="2.500"/><circle cx="7.500" cy="7.500" r="5.800" fill="#565656" stroke="#d8d8d8" stroke-width="2"/><path d="M4.500 6c1-2 3-2 4-2" stroke="#aaa" fill="none"/>`, 18, "")}
          <input type="text" aria-label="Search" value="a"></label>
        <ul class="cats">${categories.map((c) => html`<li><button class="entry">${c}</button></li>`)}</ul>
        <div class="foot"><button class="entry">All</button><h2>History</h2><div class="none">(no entries)</div></div>
      </section>

      <button class="upload"><svg viewBox="0 0 29 24" aria-hidden="true"><g fill="none" stroke="#fff" stroke-width="2.500"><circle cx="14.500" cy="8" r="3.800"/><circle cx="9.500" cy="14.500" r="3.800"/><circle cx="19.500" cy="14.500" r="3.800"/></g></svg><span>拖拽上传</span></button>
      <svg class="cursor" viewBox="0 0 16 24" aria-hidden="true"><path d="M2 2v17l4-4 3 7 3-1-3-7h5z" fill="#fff" stroke="#222"/></svg>
    </div>`;
  }
}
